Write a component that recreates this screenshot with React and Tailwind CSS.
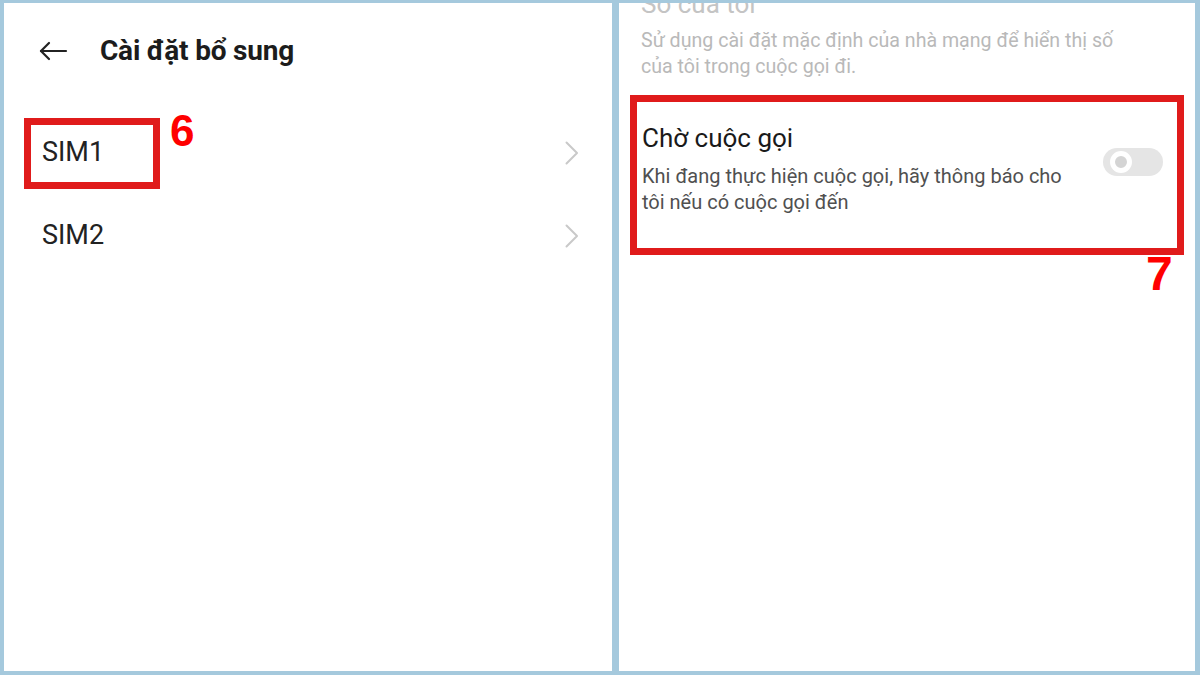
import React from 'react';

const FONT = { fontFamily: 'Roboto, "Noto Sans", sans-serif' };

function BackArrow() {
  return (
    <svg width="30" height="20" viewBox="0 0 30 20" fill="none">
      <path d="M28 10H3" stroke="#222" strokeWidth="2.2" strokeLinecap="round" />
      <path d="M11 2L3 10l8 8" stroke="#222" strokeWidth="2.2" strokeLinecap="round" strokeLinejoin="round" />
    </svg>
  );
}

function Chevron() {
  return (
    <svg width="14" height="24" viewBox="0 0 14 24" fill="none">
      <path d="M1.5 1.5L12 12 1.5 22.5" stroke="#c9c9c9" strokeWidth="2" strokeLinecap="round" strokeLinejoin="round" />
    </svg>
  );
}

function SimRow({ label }) {
  return (
    <div className="h-[83px] flex items-center justify-between pl-[38px] pr-[33px]">
      <span className="text-[27px] text-[#222]">{label}</span>
      <Chevron />
    </div>
  );
}

function Toggle() {
  return (
    <div className="w-[60px] h-[28px] rounded-full bg-[#e5e5e5] flex items-center shrink-0">
      <div className="ml-[7px] w-[22px] h-[22px] rounded-full border-[5px] border-white bg-[#d4d4d4]" />
    </div>
  );
}

export default function App() {
  return (
    <div
      className="w-[1200px] h-[675px] bg-[#a5c9dd] flex gap-[7px] pt-[3px] pl-[4px] pr-[5px] pb-[4px] overflow-hidden"
      style={FONT}
    >
      {/* left screen: extra settings list */}
      <div className="relative w-[608px] h-full bg-white">
        <div className="h-[96px] flex items-center pl-[34px] gap-[32px]">
          <BackArrow />
          <h1 className="text-[28px] font-bold text-[#1c1c1c] tracking-[-0.2px]">Cài đặt bổ sung</h1>
        </div>
        <div className="pt-[12px]">
          <SimRow label="SIM1" />
          <SimRow label="SIM2" />
        </div>

        {/* step marker */}
        <div className="absolute left-[20px] top-[115px] w-[136px] h-[71px] border-[7px] border-[#e01b1b]" />
        <span
          className="absolute left-[166px] top-[106px] text-[44px] font-bold text-[#ff0000] leading-none"
          style={{ fontFamily: '"Liberation Sans", Arial, sans-serif' }}
        >
          6
        </span>
      </div>

      {/* right screen: call waiting */}
      <div className="relative flex-1 h-full bg-white overflow-hidden">
        <div className="pl-[22px] pr-[64px]">
          <p className="text-[26px] text-[#c4c4c4] leading-[30px] -mt-[14px]">Số của tôi</p>
          <p className="text-[19.6px] text-[#b9b9b9] leading-[26px] mt-[9px]">
            Sử dụng cài đặt mặc định của nhà mạng để hiển thị số của tôi trong cuộc gọi đi.
          </p>
        </div>

        <div className="relative mt-[15px] h-[160px] flex items-start pt-[27px] pl-[23px] pr-[32px]">
          <div className="flex-1 pr-[40px]">
            <p className="text-[26px] text-[#1a1a1a] leading-[32px]">Chờ cuộc gọi</p>
            <p className="text-[20px] text-[#505050] leading-[26px] mt-[9px]">
              Khi đang thực hiện cuộc gọi, hãy thông báo cho tôi nếu có cuộc gọi đến
            </p>
          </div>
          <div className="mt-[26px]">
            <Toggle />
          </div>
          <div className="absolute left-[11px] top-0 w-[554px] h-[160px] border-[7px] border-[#e01b1b]" />
        </div>
        <span
          className="absolute left-[527px] top-[247px] text-[48px] font-bold text-[#ff0000] leading-none"
          style={{ fontFamily: '"Liberation Sans", Arial, sans-serif' }}
        >
          7
        </span>
      </div>
    </div>
  );
}
